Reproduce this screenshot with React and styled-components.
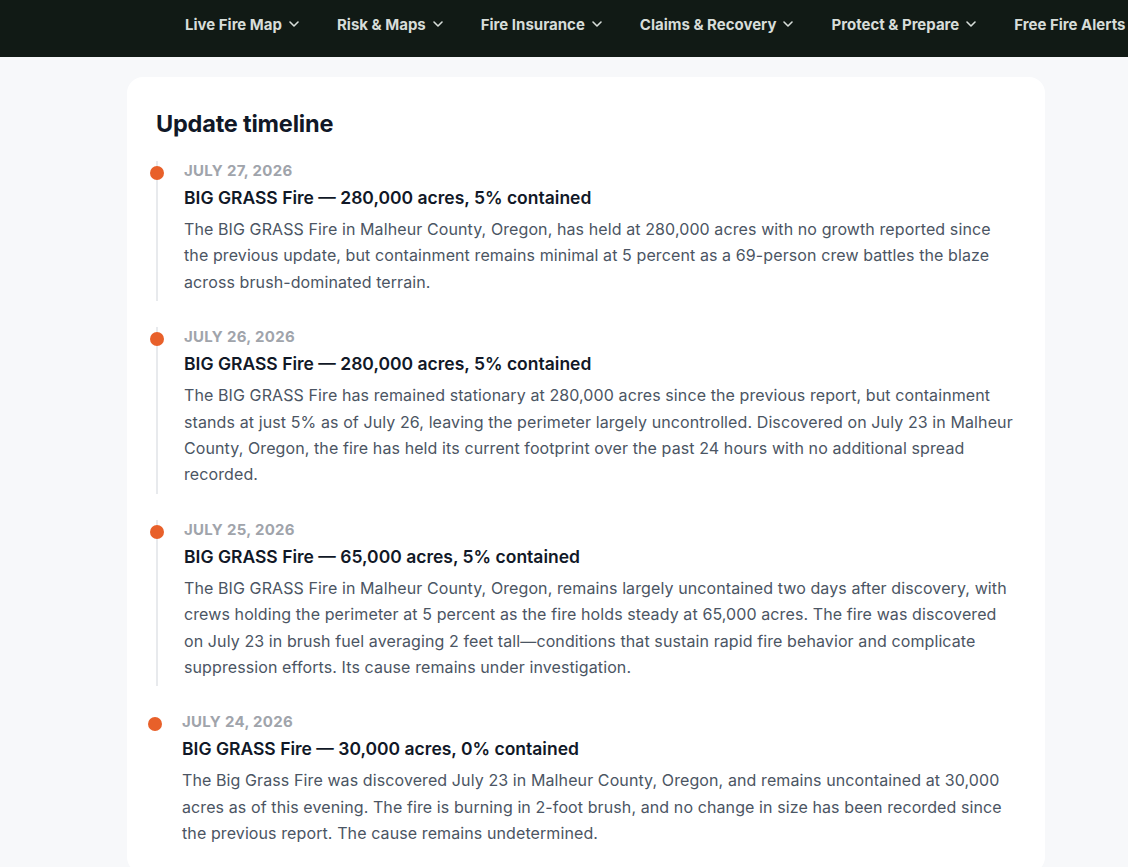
import React from 'react';
import styled, { createGlobalStyle } from 'styled-components';

const GlobalStyle = createGlobalStyle`
  body {
    margin: 0;
    background: #f7f8fa;
    font-family: Inter, "Noto Sans", sans-serif;
    overflow: hidden;
  }
`;

const NavBar = styled.nav`
  height: 57px;
  box-sizing: border-box;
  padding: 0 0 9px 185px;
  background: #111a15;
  display: flex;
  align-items: center;
  gap: 35px;
  white-space: nowrap;
  overflow: hidden;
`;

const NavItem = styled.div`
  display: flex;
  align-items: center;
  gap: 4px;
  color: #d7ddd9;
  font-size: 15px;
  font-weight: 700;
  letter-spacing: 0;
  flex-shrink: 0;
`;

const Main = styled.main`
  padding: 20px 0 0 127px;
`;

const Card = styled.section`
  width: 918px;
  box-sizing: border-box;
  background: #ffffff;
  border-radius: 16px;
  padding: 32px 29px 20px 29px;
`;

const Heading = styled.h2`
  margin: 0 0 22px 0;
  font-size: 23.5px;
  line-height: 30px;
  font-weight: 700;
  color: #111827;
  letter-spacing: -0.2px;
`;

const Item = styled.div`
  position: relative;
  border-left: ${(p) => (p.last ? 'none' : '2px solid #e8eaed')};
  padding: 0 0 6px 26px;
  margin-bottom: ${(p) => (p.last ? '0' : '26px')};
`;

const Dot = styled.span`
  position: absolute;
  left: -8px;
  top: 5px;
  width: 14px;
  height: 14px;
  border-radius: 50%;
  background: #e8602a;
`;

const DateLabel = styled.div`
  font-size: 15px;
  line-height: 20px;
  font-weight: 700;
  color: #a0a4ab;
  letter-spacing: 0.3px;
  text-transform: uppercase;
`;

const Title = styled.h3`
  margin: 5px 0 6px 0;
  font-size: 17.5px;
  line-height: 24px;
  font-weight: 600;
  color: #111827;
`;

const Body = styled.p`
  margin: 0;
  font-size: 16px;
  line-height: 26.4px;
  letter-spacing: 0.1px;
  color: #4b5563;
`;

const Chevron = () => (
  <svg width="16" height="16" viewBox="0 0 24 24" fill="none" stroke="currentColor" strokeWidth="2.4" strokeLinecap="round" strokeLinejoin="round">
    <path d="m6 9 6 6 6-6" />
  </svg>
);

const navItems = [
  { label: 'Live Fire Map', menu: true },
  { label: 'Risk & Maps', menu: true },
  { label: 'Fire Insurance', menu: true },
  { label: 'Claims & Recovery', menu: true },
  { label: 'Protect & Prepare', menu: true },
  { label: 'Free Fire Alerts', menu: false },
];

const updates = [
  {
    date: 'July 27, 2026',
    title: 'BIG GRASS Fire — 280,000 acres, 5% contained',
    text: 'The BIG GRASS Fire in Malheur County, Oregon, has held at 280,000 acres with no growth reported since the previous update, but containment remains minimal at 5 percent as a 69-person crew battles the blaze across brush-dominated terrain.',
  },
  {
    date: 'July 26, 2026',
    title: 'BIG GRASS Fire — 280,000 acres, 5% contained',
    text: 'The BIG GRASS Fire has remained stationary at 280,000 acres since the previous report, but containment stands at just 5% as of July 26, leaving the perimeter largely uncontrolled. Discovered on July 23 in Malheur County, Oregon, the fire has held its current footprint over the past 24 hours with no additional spread recorded.',
  },
  {
    date: 'July 25, 2026',
    title: 'BIG GRASS Fire — 65,000 acres, 5% contained',
    text: 'The BIG GRASS Fire in Malheur County, Oregon, remains largely uncontained two days after discovery, with crews holding the perimeter at 5 percent as the fire holds steady at 65,000 acres. The fire was discovered on July 23 in brush fuel averaging 2 feet tall—conditions that sustain rapid fire behavior and complicate suppression efforts. Its cause remains under investigation.',
  },
  {
    date: 'July 24, 2026',
    title: 'BIG GRASS Fire — 30,000 acres, 0% contained',
    text: 'The Big Grass Fire was discovered July 23 in Malheur County, Oregon, and remains uncontained at 30,000 acres as of this evening. The fire is burning in 2-foot brush, and no change in size has been recorded since the previous report. The cause remains undetermined.',
  },
];

const App = () => {
  return (
    <>
      <GlobalStyle />
      <NavBar>
        {navItems.map((item) => (
          <NavItem key={item.label}>
            {item.label}
            {item.menu && <Chevron />}
          </NavItem>
        ))}
      </NavBar>
      <Main>
        <Card>
          <Heading>Update timeline</Heading>
          {updates.map((u, i) => (
            <Item key={u.date} last={i === updates.length - 1}>
              <Dot />
              <DateLabel>{u.date}</DateLabel>
              <Title>{u.title}</Title>
              <Body>{u.text}</Body>
            </Item>
          ))}
        </Card>
      </Main>
    </>
  );
};

export default App;
